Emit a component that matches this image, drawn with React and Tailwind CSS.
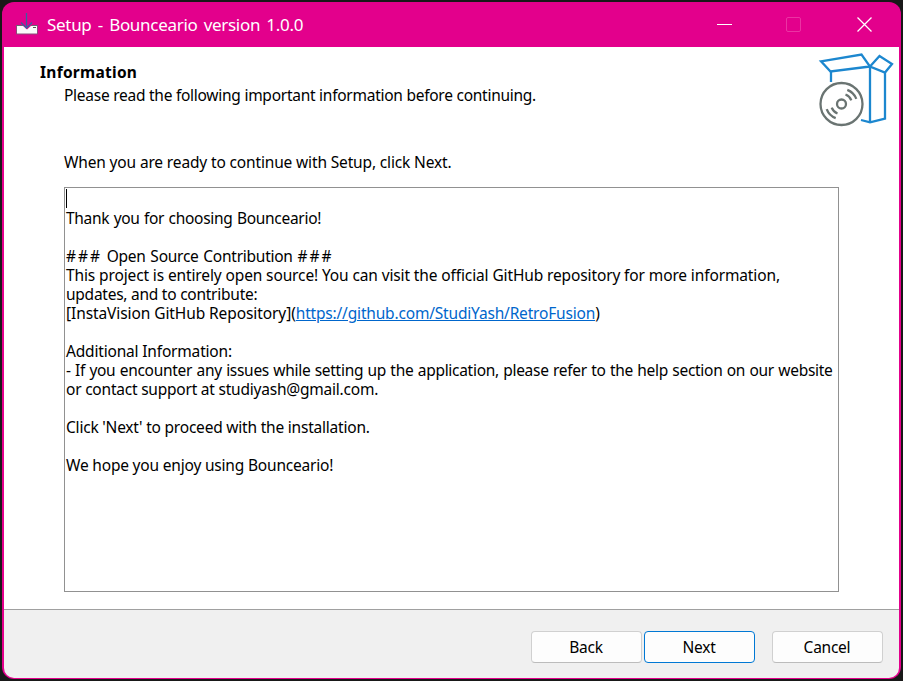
const lines = [
  { text: 'Thank you for choosing Bounceario!', tracking: 'tracking-[-0.29px] [word-spacing:0.6px]' },
  { text: '' },
  { hash: '###', text: ' Open Source Contribution ', tracking: 'tracking-[-0.25px] [word-spacing:0.9px]' },
  { text: 'This project is entirely open source! You can visit the official GitHub repository for more information,', tracking: 'tracking-[-0.125px]' },
  { text: 'updates, and to contribute:', tracking: 'tracking-[-0.25px]' },
  { text: '[InstaVision GitHub Repository](', link: 'https://github.com/StudiYash/RetroFusion', end: ')', tracking: 'tracking-[-0.09px]' },
  { text: '' },
  { text: 'Additional Information:', tracking: 'tracking-[-0.18px]' },
  { text: '- If you encounter any issues while setting up the application, please refer to the help section on our website', tracking: 'tracking-[-0.29px] [word-spacing:0.6px]' },
  { text: 'or contact support at studiyash@gmail.com.', tracking: 'tracking-[-0.22px]' },
  { text: '' },
  { text: "Click 'Next' to proceed with the installation.", tracking: 'tracking-[-0.21px]' },
  { text: '' },
  { text: 'We hope you enjoy using Bounceario!', tracking: 'tracking-[-0.19px]' },
];

function SetupIcon() {
  return (
    <svg className="mt-[11px] self-start" width="22" height="22" viewBox="0 0 22 22" fill="none">
      <path d="M0.5 12.5h21v8.500h-21z" fill="#fafafa" stroke="#8b4a78" />
      <path d="M0 12.5h22" stroke="#6b6470" />
      <path d="M17 14.500h3" stroke="#555" />
      <path d="M6 12h10l-5 4.500z" fill="#e3008c" />
      <path d="M10.500 0v15M5 9.500l5.500 5.500 5.500-5.500" stroke="#3a5f9f" strokeWidth="1.300" />
    </svg>
  );
}

function BoxIcon() {
  return (
    <svg width="76" height="76" viewBox="818 52 76 76" fill="none">
      <g stroke="#1c87cf" strokeWidth="2.300">
        <path d="M821 61.300 861.500 54.500 870 66.500 830.500 71.500z" />
        <path d="M870 66.500 879.500 56 892 64 885 72.500z" />
        <path d="M831 71v11M870 67v55.500M885 72.500v46L870 122.300l-9-2.300" />
      </g>
      <g stroke="#6a7472" strokeWidth="2.300">
        <circle cx="841.500" cy="104" r="21" />
        <circle cx="841.500" cy="104" r="4.500" />
        <path d="M845.500 94.500a10 10 0 0 1 5.800 5.800M847.300 89.800a15.500 15.500 0 0 1 9 9M837.500 113.500a10 10 0 0 1-5.800-5.800M835.700 118.200a15.500 15.500 0 0 1-9-9" />
      </g>
    </svg>
  );
}

function Button({ children, primary }) {
  return (
    <button className={`h-8 w-[111px] rounded-[4px] border bg-[#fdfdfd] pt-px pr-px tracking-[-0.25px] ${primary ? 'border-[#0078d4]' : 'border-[#d0d0d0] border-b-[#bcbcbc]'}`}>
      {children}
    </button>
  );
}

export default function App() {
  return (
    <div className="h-[681px] w-[903px] overflow-hidden bg-[#181818] px-[2px] pt-[2px] pb-[2px] font-['Noto_Sans',sans-serif] text-[15.5px] leading-[19px] text-black">
      <div className="flex h-[677px] flex-col overflow-hidden rounded-[12px] bg-[#e3008c] px-[2px] pb-px">
        <header className="flex h-[45px] shrink-0 items-center pl-3 text-white">
          <SetupIcon />
          <h1 className="ml-[9px] text-[17px] tracking-[-0.3px] whitespace-nowrap [word-spacing:2.1px]">Setup - Bounceario version 1.0.0</h1>
          <svg className="ml-auto mr-[25px]" width="158" height="17" viewBox="0 0 158 17" fill="none" stroke="white">
            <path d="M1 8.500h15" />
            <rect x="70.500" y="1.500" width="14" height="14" rx="1.500" stroke="#eb33a3" />
            <path d="m141.500 1.500 14 14m0-14-14 14" strokeWidth="1.300" />
          </svg>
        </header>
        <div className="flex min-h-0 grow flex-col overflow-hidden rounded-b-[10px] bg-[#f0f0f0]">
          <main className="h-[563px] shrink-0 border-b border-[#a0a0a0] bg-white">
            <div className="flex h-[106px] justify-between pl-9 pr-[5px]">
              <div className="pt-4 whitespace-nowrap">
                <h2 className="text-[15.5px] font-bold tracking-[0.27px]">Information</h2>
                <p className="mt-1 ml-6 tracking-[-0.26px]">Please read the following important information before continuing.</p>
              </div>
              <div className="pt-[5px]"><BoxIcon /></div>
            </div>
            <p className="ml-[60px] tracking-[-0.15px] whitespace-nowrap">When you are ready to continue with Setup, click Next.</p>
            <div className="mt-[15px] ml-[60px] h-[405px] w-[775px] border border-[#919191] pt-px pl-px">
              <div className="h-5"><div className="h-[19px] w-px bg-black" /></div>
              {lines.map((line, i) => (
                <p key={i} className={`h-[19px] whitespace-pre ${line.tracking ?? ''}`}>
                  {line.hash && <span className="tracking-[2px]">{line.hash}</span>}
                  {line.text}
                  {line.hash && <span className="tracking-[2px]">{line.hash}</span>}
                  {line.link && <a className="tracking-[-0.18px] text-[#0066cc] underline">{line.link}</a>}
                  {line.end}
                </p>
              ))}
            </div>
          </main>
          <footer className="flex justify-end pt-[21px] pr-4">
            <Button>Back</Button>
            <div className="ml-[2px]"><Button primary>Next</Button></div>
            <div className="ml-[17px]"><Button>Cancel</Button></div>
          </footer>
        </div>
      </div>
    </div>
  );
}
